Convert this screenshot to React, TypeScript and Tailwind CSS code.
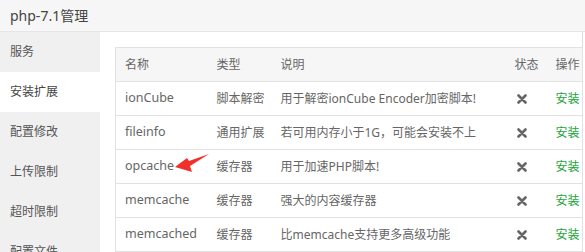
import React from 'react'

const menu = ['服务', '安装扩展', '配置修改', '上传限制', '超时限制', '配置文件']

const rows = [
  { name: 'ionCube', type: '脚本解密', desc: '用于解密ionCube Encoder加密脚本!' },
  { name: 'fileinfo', type: '通用扩展', desc: '若可用内存小于1G，可能会安装不上' },
  { name: 'opcache', type: '缓存器', desc: '用于加速PHP脚本!' },
  { name: 'memcache', type: '缓存器', desc: '强大的内容缓存器' },
  { name: 'memcached', type: '缓存器', desc: '比memcache支持更多高级功能' },
]

function CrossIcon() {
  return (
    <svg width="10" height="10" viewBox="0 0 10 10" className="inline-block">
      <path d="M1.5 1.5 L8.5 8.5 M8.5 1.5 L1.5 8.5" stroke="#666" strokeWidth="2.6" strokeLinecap="round" />
    </svg>
  )
}

export default function App() {
  const active = 1

  return (
    <div
      className="w-[585px] h-[252px] overflow-hidden bg-white text-[12px] text-[#666]"
      style={{ fontFamily: '"Noto Sans", "Noto Sans CJK SC", sans-serif' }}
    >
      {/* Title */}
      <div className="h-[32px] flex items-center px-[10px] bg-[#f6f6f6] border-b border-[#e6e6e6] text-[14px] text-[#444]">
        php-7.1管理
      </div>

      <div className="flex h-[220px]">
        {/* Sidebar */}
        <div className="w-[100px] shrink-0 bg-[#f0f0f0] flex flex-col">
          {menu.map((m, i) => (
            <div
              key={m}
              className={
                'h-[40px] shrink-0 flex items-center px-[10px] ' +
                (i === active ? 'bg-white text-[#444]' : 'text-[#555]')
              }
            >
              {m}
            </div>
          ))}
        </div>

        {/* Content */}
        <div className="w-[483px] shrink-0 border-r border-[#ddd] pl-[15px] pt-[15px]">
          <div className="relative">
            <table className="w-[467px] border-collapse table-fixed">
              <colgroup>
                <col className="w-[92px]" />
                <col className="w-[64px]" />
                <col className="w-[234px]" />
                <col className="w-[41px]" />
                <col className="w-[36px]" />
              </colgroup>
              <thead>
                <tr className="bg-[#f6f6f6] h-[34px] border border-[#e2e2e2]">
                  <th className="text-left font-normal pl-[9px]">名称</th>
                  <th className="text-left font-normal pl-[9px]">类型</th>
                  <th className="text-left font-normal pl-[9px]">说明</th>
                  <th className="text-left font-normal pl-[9px]">状态</th>
                  <th className="text-left font-normal pl-[9px]">操作</th>
                </tr>
              </thead>
              <tbody>
                {rows.map((r) => (
                  <tr key={r.name} className="h-[34px] border border-[#e2e2e2]">
                    <td className="pl-[9px] whitespace-nowrap text-[12.5px]">{r.name}</td>
                    <td className="pl-[9px] whitespace-nowrap">{r.type}</td>
                    <td className="pl-[9px] whitespace-nowrap overflow-hidden">{r.desc}</td>
                    <td className="pl-[11px]">
                      <CrossIcon />
                    </td>
                    <td className="pl-[9px] whitespace-nowrap text-[#20a53a]">安装</td>
                  </tr>
                ))}
              </tbody>
            </table>

            {/* red pointer arrow next to opcache */}
            <svg
              className="absolute left-[58px] top-[106px]"
              width="40"
              height="24"
              viewBox="0 0 40 24"
            >
              <path d="M2 14 L14 5 L16 8 L36 1 L17 13 L19 19 Z" fill="#f2302b" />
            </svg>
          </div>
        </div>
      </div>
    </div>
  )
}
